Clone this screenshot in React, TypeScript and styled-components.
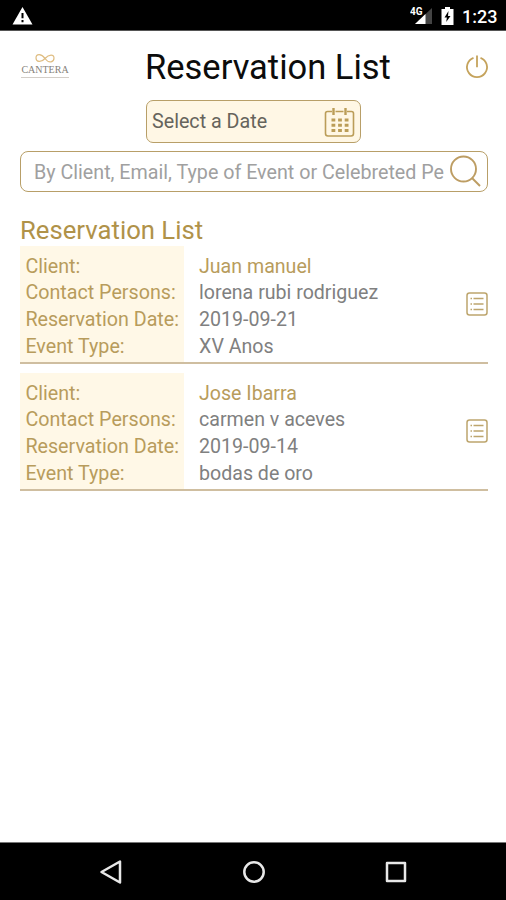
import React from 'react';
import styled, { createGlobalStyle } from 'styled-components';

const GOLD = '#b89f68';

const GlobalStyle = createGlobalStyle`
  * { box-sizing: border-box; }
  body { margin: 0; background: #fff; font-family: Roboto, "Liberation Sans", sans-serif; }
`;

const Screen = styled.div`
  width: 506px;
  height: 900px;
  display: flex;
  flex-direction: column;
  overflow: hidden;
  background: #fff;
`;

const StatusBar = styled.header`
  height: 31px;
  flex: none;
  display: flex;
  align-items: center;
  padding: 2px 9px 0 12px;
  background: #000;
  color: #fff;
  border-bottom: 1px solid #555;
  svg { display: block; }
`;

const StatusIcons = styled.div`
  display: flex;
  align-items: center;
  gap: 8px;
  margin-left: auto;
`;

const Clock = styled.span`
  width: 35px;
  padding-top: 1px;
  font-size: 18px;
  font-weight: 500;
  line-height: 20px;
  white-space: nowrap;
`;

const TitleBar = styled.div`
  height: 69px;
  flex: none;
  display: grid;
  grid-template-columns: 125px 1fr 24px;
  padding: 2px 17px 0 20px;
  align-items: center;
  svg { display: block; }
`;

const Title = styled.h1`
  margin: 1px 0 0;
  font-size: 34.5px;
  font-weight: 400;
  line-height: 42px;
  color: #0c0c0c;
  white-space: nowrap;
`;

const Logo = styled.div`
  width: 50px;
  height: 26px;
  display: flex;
  flex-direction: column;
  align-items: center;
`;

const LogoName = styled.span`
  width: 48px;
  border-bottom: 1px solid #d3cec8;
  text-align: center;
  font-family: "Liberation Serif", serif;
  font-size: 10px;
  line-height: 13px;
  height: 15px;
  color: #857f79;
`;

const DateField = styled.button`
  width: 215px;
  height: 43px;
  flex: none;
  margin: 0 0 0 146px;
  padding: 1px 5px 0;
  display: flex;
  align-items: center;
  justify-content: space-between;
  border: 1.5px solid ${GOLD};
  border-radius: 7px;
  background: #fff7e5;
  color: #66645c;
  font: 400 19.7px/24px Roboto, sans-serif;
`;

const SearchField = styled.label`
  height: 41px;
  flex: none;
  margin: 8px 18px 0 20px;
  padding: 0 5px 0 13px;
  display: flex;
  align-items: center;
  border: 1.5px solid ${GOLD};
  border-radius: 8px;
  background: #fff;
`;

const SearchHint = styled.span`
  width: 410px;
  flex: none;
  margin: 2px 5px 0 0;
  overflow: hidden;
  white-space: nowrap;
  color: #a0a0a0;
  font-size: 19.7px;
  line-height: 26px;
`;

const Content = styled.main`
  flex: 1;
  padding: 23px 18px 0 20px;
`;

const Heading = styled.h2`
  height: 31px;
  margin: 0;
  font-size: 25.7px;
  font-weight: 400;
  line-height: 30px;
  color: #b09249;
`;

const Card = styled.article`
  height: 118px;
  margin-bottom: 9px;
  display: grid;
  grid-template-columns: 164px 1fr 22px;
  border-bottom: 2px solid #cfbea0;
`;

const Column = styled.div<{ $tinted?: boolean }>`
  padding: ${p => (p.$tinted ? '7.8px 0 0 5.4px' : '7.8px 0 0 15px')};
  background: ${p => (p.$tinted ? '#fff8e7' : 'transparent')};
  font-size: ${p => (p.$tinted ? '19.7px' : '19.6px')};
`;

const Line = styled.div<{ $gold?: boolean }>`
  height: 26.7px;
  line-height: 26.7px;
  white-space: nowrap;
  color: ${p => (p.$gold ? '#b89c5c' : '#808080')};
`;

const DetailsButton = styled.span`
  align-self: center;
  svg { display: block; }
`;

const NavBar = styled.nav`
  height: 58px;
  flex: none;
  display: grid;
  grid-template-columns: 22px 22px 22px;
  column-gap: 120.5px;
  justify-content: center;
  align-items: center;
  padding-left: 1px;
  background: #000;
  border-top: 1px solid #777;
  svg { display: block; }
`;

const WarningIcon = () => (
  <svg width="21" height="18" viewBox="0 0 21 18">
    <path d="M10.5 0 20.5 17.5H.5Z" fill="#fff" />
    <path d="M10.5 6v5.2M10.5 13v2.2" stroke="#000" strokeWidth="2" />
  </svg>
);

const SignalIcon = () => (
  <svg width="23" height="18" viewBox="0 0 23 18">
    <path d="M22 1v16H5Z" fill="#444" />
    <path d="M15.500 7V17H5Z" fill="#fff" />
    <text x="0" y="8" fill="#fff" fontFamily="Roboto" fontSize="10" fontWeight="700">4G</text>
  </svg>
);

const BatteryIcon = () => (
  <svg width="13" height="18" viewBox="0 0 13 18">
    <path d="M4 0h5v2h3.5v16H.5V2H4Z" fill="#fff" />
    <path d="M7.5 4 3.5 10.5h2.4L5.2 15l4.3-6H7Z" fill="#000" />
  </svg>
);

const PowerIcon = () => (
  <svg width="24" height="24" viewBox="0 0 24 24" fill="none" stroke="#c5a35c" strokeWidth="1.8">
    <path d="M8.500 2.800a10 10 0 1 0 7 0M12 .500v11.800" />
  </svg>
);

const CalendarIcon = () => (
  <svg width="31" height="31" viewBox="0 0 31 31" fill="none" stroke="#bb9d58" strokeWidth="1.6">
    <path d="M8 4.500H3.500Q1.500 4.500 1.500 6.500v20q0 2.500 2.500 2.500h23q2.500 0 2.500-2.500v-20q0-2-2-2H23M11.500 4.500h8" />
    <path d="M9.500 1v7M21.500 1v7" strokeWidth="2.4" />
    <path d="M7.500 13h17M7.500 18.300h17M7.500 23.600h17" strokeWidth="3" strokeDasharray="3.800 2.800" />
  </svg>
);

const SearchIcon = () => (
  <svg width="32" height="33" viewBox="0 0 32 33" fill="none" stroke="#bd9d63" strokeWidth="1.9">
    <circle cx="14.500" cy="14" r="12.500" />
    <path d="m23 23 8 8" />
  </svg>
);

const ListIcon = () => (
  <svg width="22" height="24" viewBox="0 0 22 24" fill="none" stroke="#bda56d" strokeWidth="1.5">
    <rect x="1" y="1" width="20" height="22" rx="2.500" />
    <path d="M4.500 6.500h1.500m1.500 0h10M4.500 12h1.500m1.500 0h10M4.500 17.500h1.500m1.500 0h10" strokeWidth="1.300" />
  </svg>
);

const reservations = [
  { client: 'Juan manuel', contacts: 'lorena rubi rodriguez', date: '2019-09-21', type: 'XV Anos' },
  { client: 'Jose Ibarra', contacts: 'carmen v aceves', date: '2019-09-14', type: 'bodas de oro' },
];

export default function App() {
  return (
    <Screen>
      <GlobalStyle />
      <StatusBar>
        <WarningIcon />
        <StatusIcons>
          <SignalIcon />
          <BatteryIcon />
          <Clock>1:23</Clock>
        </StatusIcons>
      </StatusBar>
      <TitleBar>
        <Logo>
          <svg width="20" height="9" viewBox="0 0 20 9" fill="none" stroke="#dfbd82" strokeWidth="1.2">
            <path d="M10 4.500C6-1 1 0 1 4s5 5 9 .500S19 0 19 4s-5 6-9 .500" />
          </svg>
          <LogoName>CANTERA</LogoName>
        </Logo>
        <Title>Reservation List</Title>
        <PowerIcon />
      </TitleBar>
      <DateField>
        Select a Date
        <CalendarIcon />
      </DateField>
      <SearchField>
        <SearchHint>By Client, Email, Type of Event or Celebreted Person</SearchHint>
        <SearchIcon />
      </SearchField>
      <Content>
        <Heading>Reservation List</Heading>
        {reservations.map(r => (
          <Card key={r.client}>
            <Column $tinted>
              <Line $gold>Client:</Line>
              <Line $gold>Contact Persons:</Line>
              <Line $gold>Reservation Date:</Line>
              <Line $gold>Event Type:</Line>
            </Column>
            <Column>
              <Line $gold>{r.client}</Line>
              <Line>{r.contacts}</Line>
              <Line>{r.date}</Line>
              <Line>{r.type}</Line>
            </Column>
            <DetailsButton><ListIcon /></DetailsButton>
          </Card>
        ))}
      </Content>
      <NavBar>
        <svg width="22" height="24" viewBox="0 0 22 24" fill="none" stroke="#e8e8e8" strokeWidth="2.500" strokeLinejoin="round">
          <path d="M20 1.500v21L1.500 12Z" />
        </svg>
        <svg width="22" height="22" viewBox="0 0 22 22" fill="none" stroke="#e8e8e8" strokeWidth="2.500">
          <circle cx="11" cy="11" r="9.700" />
        </svg>
        <svg width="22" height="22" viewBox="0 0 22 22" fill="none" stroke="#e8e8e8" strokeWidth="2.500" strokeLinejoin="round">
          <rect x="2" y="2" width="18" height="18" />
        </svg>
      </NavBar>
    </Screen>
  );
}
